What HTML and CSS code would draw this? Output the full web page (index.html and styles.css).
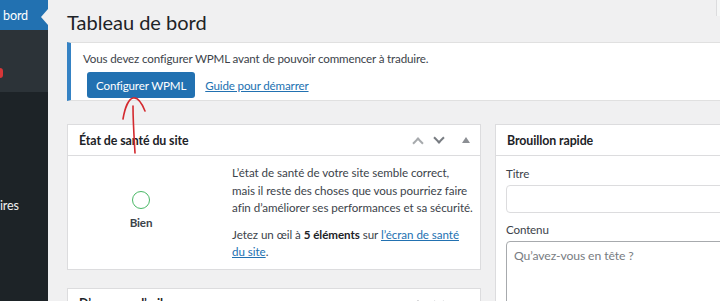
FILE: index.html
```html
<!DOCTYPE html>
<html lang="fr">
<head>
  <meta charset="UTF-8" />
  <title>Tableau de bord</title>
  <link rel="stylesheet" href="styles.css">
</head>
<body>
  <div class="admin">
    <div class="sidebar">
      <div class="menu-current">bord</div>
      <div class="submenu"><span class="red-mark"></span></div>
      <div class="menu-rest">
        <div class="menu-item">ires</div>
      </div>
    </div>

    <div class="main">
      <div class="title-row">
        <h1>Tableau de bord</h1>
        <div class="screen-tab"></div>
      </div>

      <div class="notice">
        <p>Vous devez configurer WPML avant de pouvoir commencer à traduire.</p>
        <div class="notice-actions">
          <button class="btn-primary">Configurer WPML</button>
          <a href="#" class="link">Guide pour démarrer</a>
        </div>
      </div>

      <div class="widgets">
        <div class="col col-left">
          <div class="postbox">
            <div class="postbox-header">
              <h2>État de santé du site</h2>
              <div class="handles">
                <span class="chev up"></span>
                <span class="chev down"></span>
                <span class="tri"></span>
              </div>
            </div>
            <div class="health-body">
              <div class="health-status">
                <span class="ring"></span>
                <strong>Bien</strong>
              </div>
              <div class="health-text">
                <p>L’état de santé de votre site semble correct,<br>mais il reste des choses que vous pourriez faire<br>afin d’améliorer ses performances et sa sécurité.</p>
                <p>Jetez un œil à <strong>5 éléments</strong> sur <a href="#" class="link">l’écran de santé<br>du site</a>.</p>
              </div>
            </div>
          </div>

          <div class="postbox">
            <div class="postbox-header">
              <h2>D’un coup d’œil</h2>
              <div class="handles">
                <span class="chev up"></span>
                <span class="chev down"></span>
                <span class="tri"></span>
              </div>
            </div>
          </div>
        </div>

        <div class="col col-right">
          <div class="postbox">
            <div class="postbox-header">
              <h2>Brouillon rapide</h2>
            </div>
            <div class="draft-body">
              <label class="field-label">Titre</label>
              <input type="text" class="field-input" />
              <label class="field-label content-label">Contenu</label>
              <textarea class="field-area" rows="4" placeholder="Qu’avez-vous en tête ?"></textarea>
            </div>
          </div>
        </div>
      </div>

      <!-- hand-drawn annotation on top of the screenshot -->
      <svg class="scribble" width="60" height="70" viewBox="0 0 60 70">
        <path d="M4 28 C6 16 10 8 14 7 C18 6 22 10 26 20" />
        <path d="M14 15 C14 30 15 45 16 62" />
      </svg>
    </div>
  </div>
</body>
</html>
```

FILE: styles.css
```css
* {
  margin: 0;
  padding: 0;
  box-sizing: border-box;
}

body {
  font-family: 'Lato', 'Noto Sans', sans-serif;
  font-size: 11.6px;
  letter-spacing: -0.15px;
  color: #3c434a;
  background: #f0f0f1;
  overflow: hidden;
}

.admin {
  display: flex;
  height: 301px;
  overflow: hidden;
}

/* left admin menu */
.sidebar {
  width: 48px;
  flex-shrink: 0;
  background: #1d2327;
  display: flex;
  flex-direction: column;
}

.menu-current {
  position: relative;
  height: 30px;
  background: #2271b1;
  color: #fff;
  font-size: 12.6px;
  display: flex;
  align-items: center;
  padding-left: 3px;
}

.menu-current::after {
  content: '';
  position: absolute;
  right: 0;
  top: 9px;
  border: 8px solid transparent;
  border-right: 7px solid #f0f0f1;
  border-left: none;
}

.submenu {
  height: 62px;
  background: #2c3338;
}

.red-mark {
  display: block;
  width: 3px;
  height: 10px;
  margin-top: 38px;
  background: #d63638;
  border-radius: 0 3px 3px 0;
}

.menu-rest {
  flex: 1;
  padding-top: 102px;
}

.menu-item {
  color: #f0f0f1;
  font-size: 12.6px;
  height: 22px;
  display: flex;
  align-items: center;
}

/* main area */
.main {
  flex: 1;
  position: relative;
  padding: 8px 0 0 19px;
  overflow: hidden;
}

.title-row {
  display: flex;
  justify-content: space-between;
  align-items: flex-start;
}

h1 {
  font-size: 20px;
  font-weight: 400;
  letter-spacing: 0;
  color: #1d2327;
  line-height: 28px;
}

.screen-tab {
  width: 4px;
  height: 16px;
  margin-top: -8px;
  border-left: 1px solid #dcdcde;
  background: #f6f7f7;
}

.notice {
  margin-top: 6px;
  margin-right: -10px;
  background: #fff;
  border: 1px solid #e0e0e0;
  border-left: 4px solid #3582c4;
  padding: 6px 12px 3px 12px;
  height: 59px;
}

.notice p {
  line-height: 20px;
}

.notice-actions {
  display: flex;
  align-items: center;
  gap: 10px;
  margin-top: 3px;
  padding-left: 4px;
}

.btn-primary {
  font-family: inherit;
  font-size: 11.6px;
  letter-spacing: -0.15px;
  background: #2271b1;
  color: #fff;
  border: none;
  border-radius: 3px;
  height: 26px;
  padding: 0 9px;
}

.link {
  color: #2271b1;
  text-decoration: underline;
}

.widgets {
  display: flex;
  gap: 14px;
  margin-top: 23px;
}

.col-left {
  width: 414px;
  flex-shrink: 0;
  display: flex;
  flex-direction: column;
  gap: 18px;
}

.col-right {
  flex: 1;
  margin-right: -10px;
}

.postbox {
  background: #fff;
  border: 1px solid #dcdcde;
}

.postbox-header {
  height: 31px;
  border-bottom: 1px solid #dcdcde;
  display: flex;
  align-items: center;
  justify-content: space-between;
  padding: 0 10px 0 11px;
}

.postbox-header h2 {
  font-size: 12.4px;
  font-weight: 700;
  letter-spacing: -0.1px;
  color: #1d2327;
}

.handles {
  display: flex;
  align-items: center;
  gap: 13px;
}

.chev {
  width: 8px;
  height: 8px;
  border-left: 2px solid #a7aaad;
  border-top: 2px solid #a7aaad;
}

.chev.up {
  transform: rotate(45deg);
  margin-top: 5px;
}

.chev.down {
  transform: rotate(225deg);
  margin-top: -4px;
  border-color: #787c82;
}

.tri {
  width: 0;
  height: 0;
  margin-left: 6px;
  border-left: 4px solid transparent;
  border-right: 4px solid transparent;
  border-bottom: 6px solid #8c8f94;
}

/* site health */
.health-body {
  display: flex;
  align-items: center;
  padding: 8px 0 8px 0;
}

.health-status {
  width: 146px;
  flex-shrink: 0;
  display: flex;
  flex-direction: column;
  align-items: center;
  gap: 7px;
  padding-bottom: 4px;
}

.ring {
  width: 18px;
  height: 18px;
  border-radius: 50%;
  border: 1.5px solid #4ab866;
}

.health-text {
  margin-left: 18px;
  line-height: 17.5px;
  letter-spacing: -0.05px;
  white-space: nowrap;
}

.health-text p + p {
  margin-top: 9px;
}

.health-text strong {
  color: #1d2327;
}

/* quick draft */
.draft-body {
  padding: 9px 0 0 10px;
  display: flex;
  flex-direction: column;
}

.field-label {
  line-height: 18px;
}

.field-input {
  margin-top: 2px;
  height: 28px;
  border: 1px solid #dcdcde;
  border-radius: 4px;
}

.content-label {
  margin-top: 8px;
}

.field-area {
  margin-top: 2px;
  height: 80px;
  border: 1px solid #a7aaad;
  border-radius: 4px;
  padding: 6px 7px;
  font-family: inherit;
  font-size: 12.2px;
  letter-spacing: -0.1px;
  resize: none;
}

.field-area::placeholder {
  color: #787c82;
}

.scribble {
  position: absolute;
  left: 71px;
  top: 91px;
  fill: none;
  stroke: #d42a2f;
  stroke-width: 1.6;
  stroke-linecap: round;
}
```
